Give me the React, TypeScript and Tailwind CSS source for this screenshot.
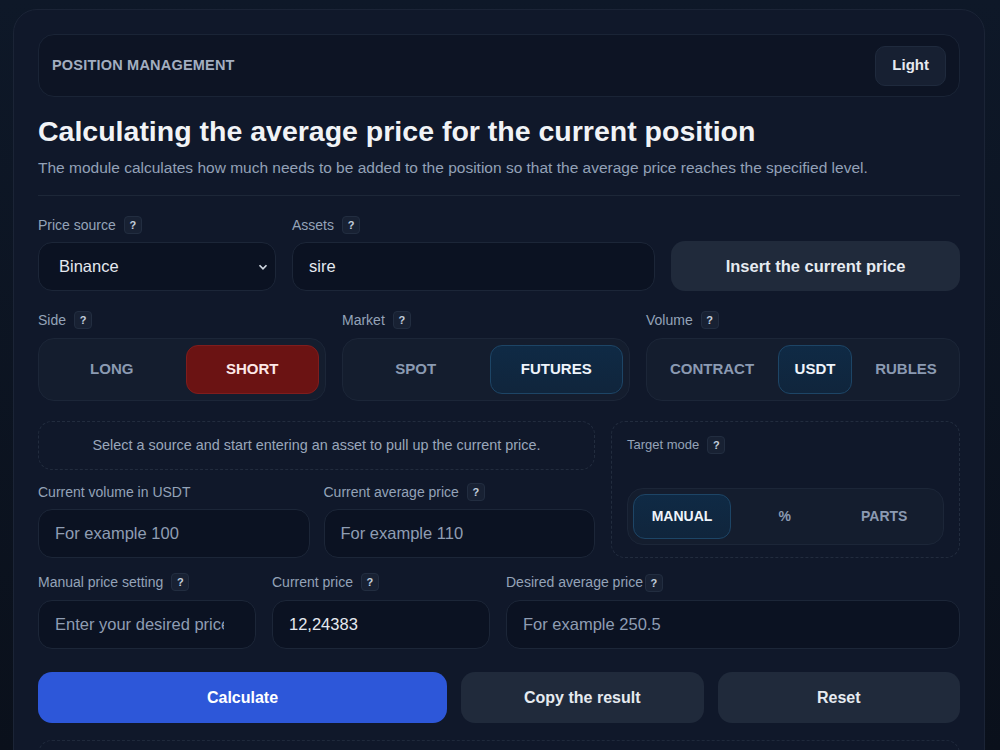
import React from 'react';

function Help() {
  return (
    <span className="ml-2 inline-flex h-[18px] w-[18px] items-center justify-center rounded-[4px] border border-[#222d40] bg-[#182133] text-[11px] font-bold text-[#c3cedd]">?</span>
  );
}

function Label({ text, help = true, tight = false }: { text: string; help?: boolean; tight?: boolean }) {
  return (
    <div className="flex h-5 items-center text-[14px] text-[#94a3b8]">
      <span>{text}</span>
      {help && (tight ? <span className="-ml-1.5"><Help /></span> : <Help />)}
    </div>
  );
}

function Field({ value, placeholder, className = '' }: { value?: string; placeholder?: string; className?: string }) {
  return (
    <div className={`flex items-center whitespace-nowrap rounded-[14px] border border-[#1c2638] bg-[#0b1222] pl-4 text-[16.5px] ${className}`}>
      <span className={`min-w-0 overflow-hidden ${value ? 'text-[#e5e9f0]' : 'text-[#8f9db3]'}`}>{value || placeholder}</span>
    </div>
  );
}

function Segment({ items, active, red = false, widths }: { items: string[]; active: string; red?: boolean; widths?: string[] }) {
  return (
    <div className="flex h-[63px] gap-[7px] rounded-[16px] border border-[#1c2638] bg-[#141d2e] p-[6px]">
      {items.map((it, i) => {
        const on = it === active;
        const cls = on
          ? red
            ? 'bg-[#6b1313] border-[#7f1d1d] text-[#fde8e8]'
            : 'bg-gradient-to-b from-[#0f2a45] to-[#10253c] border-[#1d4566] text-[#eef4fb]'
          : 'border-transparent text-[#8b9ab2]';
        return (
          <div key={it} className={`flex items-center justify-center rounded-[12px] border text-[15px] font-bold ${cls} ${widths ? widths[i] : 'flex-1'}`}>
            {it}
          </div>
        );
      })}
    </div>
  );
}

export default function App() {
  return (
    <div className="h-[750px] overflow-hidden bg-gradient-to-b from-[#0e1828] to-[#0a101b] pl-[13px] pt-[9px]" style={{ fontFamily: '"Liberation Sans", Arial, sans-serif' }}>
      <div className="w-[972px] rounded-t-[24px] border border-[#1b2436] bg-[#10182a] px-[24px] pt-[24px] pb-10">
        {/* Header */}
        <div className="flex h-[63px] items-center justify-between rounded-[16px] border border-[#1a2436] bg-[#0d1424] pl-[13px] pr-[13px]">
          <span className="text-[14.5px] font-bold tracking-[0.2px] text-[#a3aec0]">POSITION MANAGEMENT</span>
          <span className="flex h-[40px] items-center rounded-[10px] border border-[#1f2a3d] bg-[#172032] px-[16px] text-[15px] font-bold text-[#e6eaf0]">Light</span>
        </div>

        <h1 className="mt-[18px] text-[28.5px] font-bold leading-8 text-[#f1f3f6]">Calculating the average price for the current position</h1>
        <p className="mt-[11px] text-[15.5px] leading-5 text-[#93a1b7]">The module calculates how much needs to be added to the position so that the average price reaches the specified level.</p>
        <div className="mt-[17px] h-px bg-[#1d2738]" />

        {/* Row 1 */}
        <div className="mt-[19px] grid grid-cols-[238px_363px_1fr] items-end gap-4">
          <div className="flex flex-col gap-[7px]">
            <Label text="Price source" />
            <div className="flex h-[49px] items-center justify-between rounded-[14px] border border-[#1c2638] bg-[#0b1222] pl-5 pr-[5px] text-[16.5px] text-[#e5e9f0]">
              <span>Binance</span>
              <svg width="14" height="14" viewBox="0 0 12 12" fill="none" stroke="#cfd6e0" strokeWidth="1.5"><path d="M3 4.5l3 3 3-3" /></svg>
            </div>
          </div>
          <div className="flex flex-col gap-[7px]">
            <Label text="Assets" />
            <Field value="sire" className="h-[49px] pr-4" />
          </div>
          <div className="flex h-[50px] items-center justify-center rounded-[14px] bg-[#202a3b] text-[16.5px] font-bold text-[#e6eaf0]">
            Insert the current price
          </div>
        </div>

        {/* Row 2 */}
        <div className="mt-[19px] grid grid-cols-[288px_288px_1fr] gap-4">
          <div className="flex flex-col gap-2">
            <Label text="Side" />
            <Segment items={['LONG', 'SHORT']} active="SHORT" red />
          </div>
          <div className="flex flex-col gap-2">
            <Label text="Market" />
            <Segment items={['SPOT', 'FUTURES']} active="FUTURES" />
          </div>
          <div className="flex flex-col gap-2">
            <Label text="Volume" />
            <Segment items={['CONTRACT', 'USDT', 'RUBLES']} active="USDT" widths={['w-[118px]', 'w-[74px]', 'flex-1']} />
          </div>
        </div>

        {/* Row 3 */}
        <div className="mt-[20px] grid grid-cols-[557px_1fr] gap-4">
          <div className="flex flex-col">
            <div className="flex h-[49px] items-center justify-center rounded-[14px] border border-dashed border-[#222c3e] text-[14.4px] text-[#9aa7bb]">
              Select a source and start entering an asset to pull up the current price.
            </div>
            <div className="mt-[12px] grid grid-cols-2 gap-[14px]">
              <div className="flex flex-col gap-[7px]">
                <Label text="Current volume in USDT" help={false} />
                <Field placeholder="For example 100" className="h-[49px] pr-4" />
              </div>
              <div className="flex flex-col gap-[7px]">
                <Label text="Current average price" />
                <Field placeholder="For example 110" className="h-[49px] pr-4" />
              </div>
            </div>
          </div>
          <div className="flex h-[137px] flex-col justify-between rounded-[14px] border border-dashed border-[#222c3e] px-[15px] pt-[13px] pb-[12px]">
            <div className="flex h-5 items-center text-[13px] text-[#94a3b8]">
              <span>Target mode</span>
              <Help />
            </div>
            <div className="flex h-[57px] gap-2 rounded-[16px] border border-[#1c2638] bg-[#141d2e] p-[5px]">
              <div className="flex w-[98px] items-center justify-center rounded-[12px] border border-[#1d4566] bg-gradient-to-b from-[#0f2a45] to-[#10253c] text-[14px] font-bold text-[#eef4fb]">MANUAL</div>
              <div className="flex flex-1 items-center justify-center text-[14px] font-bold text-[#8b9ab2]">%</div>
              <div className="flex flex-1 items-center justify-center pr-2 text-[14px] font-bold text-[#8b9ab2]">PARTS</div>
            </div>
          </div>
        </div>

        {/* Row 4 */}
        <div className="mt-[14px] grid grid-cols-[218px_218px_1fr] gap-4">
          <div className="flex flex-col gap-2">
            <Label text="Manual price setting" />
            <Field placeholder="Enter your desired price" className="h-[49px] pr-[31px]" />
          </div>
          <div className="flex flex-col gap-2">
            <Label text="Current price" />
            <Field value="12,24383" className="h-[49px] pr-4" />
          </div>
          <div className="flex flex-col gap-2">
            <Label text="Desired average price" tight />
            <Field placeholder="For example 250.5" className="h-[49px] pr-4" />
          </div>
        </div>

        {/* Actions */}
        <div className="mt-[23px] grid grid-cols-[409px_1fr_1fr] gap-[14px]">
          <div className="flex h-[51px] items-center justify-center rounded-[14px] bg-[#2d57d9] text-[16px] font-bold text-white">Calculate</div>
          <div className="flex h-[51px] items-center justify-center rounded-[14px] bg-[#202a3b] text-[16px] font-bold text-[#e6eaf0]">Copy the result</div>
          <div className="flex h-[51px] items-center justify-center rounded-[14px] bg-[#202a3b] text-[16px] font-bold text-[#e6eaf0]">Reset</div>
        </div>

        <div className="mt-[17px] h-[80px] rounded-[14px] border border-dashed border-[#1f293b]" />
      </div>
    </div>
  );
}
